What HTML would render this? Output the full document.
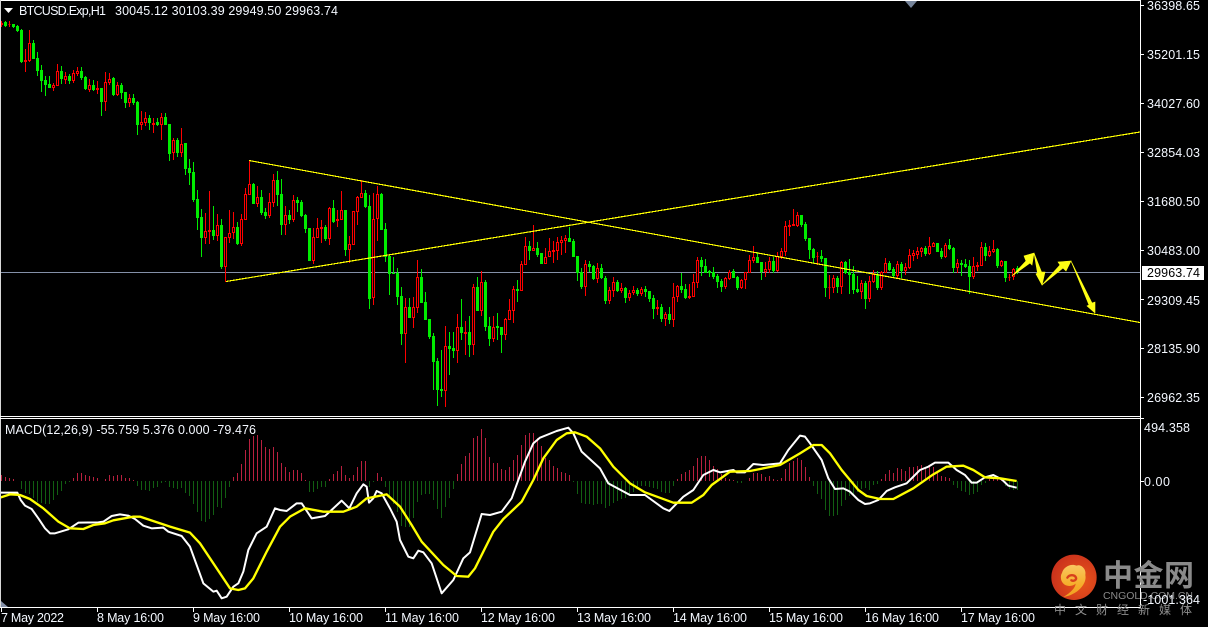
<!DOCTYPE html>
<html lang="en">
<head>
<meta charset="utf-8">
<title>BTCUSD.Exp,H1</title>
<style>
html,body{margin:0;padding:0;background:#000;width:1208px;height:627px;overflow:hidden}
svg{display:block}
text{font-family:"Liberation Sans","Noto Sans CJK SC",sans-serif;font-size:12.5px;fill:#f4f8ff}
</style>
</head>
<body>
<svg width="1208" height="627" viewBox="0 0 1208 627" xmlns="http://www.w3.org/2000/svg">
<rect width="1208" height="627" fill="#000"/>

<!-- histogram -->
<g fill="none" stroke-width="1" shape-rendering="crispEdges">
<path stroke="#b9203f" d="M1.5 481v-6M5.5 481v-4M9.5 481v-3M13.5 481v-2M73.5 481v-3M77.5 481v-8M81.5 481v-8M85.5 481v-6M89.5 481v-5M93.5 481v-4M97.5 481v-3M105.5 481v-2M109.5 481v-6M113.5 481v-5M117.5 481v-6M121.5 481v-6M125.5 481v-3M129.5 481v-3M133.5 481v-1M233.5 481v-4M237.5 481v-8M241.5 481v-17M245.5 481v-31M249.5 481v-42M253.5 481v-45M257.5 481v-46M261.5 481v-41M265.5 481v-34M269.5 481v-32M273.5 481v-34M277.5 481v-29M281.5 481v-18M285.5 481v-14M289.5 481v-9M293.5 481v-11M297.5 481v-11M301.5 481v-8M305.5 481v-1M329.5 481v-2M333.5 481v-7M337.5 481v-10M341.5 481v-15M345.5 481v-6M349.5 481v-3M353.5 481v-6M357.5 481v-14M361.5 481v-20M365.5 481v-20M377.5 481v-8M381.5 481v-4M457.5 481v-7M461.5 481v-17M465.5 481v-25M469.5 481v-28M473.5 481v-43M477.5 481v-45M481.5 481v-52M485.5 481v-43M489.5 481v-24M493.5 481v-18M497.5 481v-18M501.5 481v-12M505.5 481v-11M509.5 481v-14M513.5 481v-21M517.5 481v-26M521.5 481v-36M525.5 481v-46M529.5 481v-48M533.5 481v-48M537.5 481v-43M541.5 481v-35M545.5 481v-23M549.5 481v-21M553.5 481v-15M557.5 481v-13M561.5 481v-9M565.5 481v-8M569.5 481v-6M677.5 481v-2M681.5 481v-7M685.5 481v-9M689.5 481v-11M693.5 481v-15M697.5 481v-23M701.5 481v-25M705.5 481v-25M709.5 481v-21M713.5 481v-15M717.5 481v-12M721.5 481v-7M725.5 481v-3M729.5 481v-2M733.5 481v-1M749.5 481v-3M753.5 481v-8M757.5 481v-8M761.5 481v-7M765.5 481v-4M769.5 481v-5M773.5 481v-2M777.5 481v-1M781.5 481v-3M785.5 481v-12M789.5 481v-18M793.5 481v-20M797.5 481v-23M801.5 481v-21M805.5 481v-14M809.5 481v-4M881.5 481v-2M885.5 481v-7M889.5 481v-11M893.5 481v-8M897.5 481v-13M901.5 481v-12M905.5 481v-10M909.5 481v-14M913.5 481v-14M917.5 481v-15M921.5 481v-16M925.5 481v-13M929.5 481v-16M933.5 481v-14M937.5 481v-9M941.5 481v-5M945.5 481v-4M949.5 481v-3M989.5 481v-2M993.5 481v-2M997.5 481v-3M1001.5 481v-2"/>
<path stroke="#125f12" d="M21.5 481v8M25.5 481v12M29.5 481v13M33.5 481v17M37.5 481v21M41.5 481v22M45.5 481v23M49.5 481v23M53.5 481v19M57.5 481v14M61.5 481v10M65.5 481v3M69.5 481v1M137.5 481v5M141.5 481v9M145.5 481v9M149.5 481v10M153.5 481v7M157.5 481v6M161.5 481v2M165.5 481v1M169.5 481v6M173.5 481v7M177.5 481v8M181.5 481v7M185.5 481v12M189.5 481v15M193.5 481v23M197.5 481v31M201.5 481v40M205.5 481v41M209.5 481v38M213.5 481v34M217.5 481v26M221.5 481v27M225.5 481v17M229.5 481v6M309.5 481v11M313.5 481v11M317.5 481v8M321.5 481v6M325.5 481v6M369.5 481v6M373.5 481v1M385.5 481v6M389.5 481v15M393.5 481v23M397.5 481v31M401.5 481v45M405.5 481v46M409.5 481v46M413.5 481v37M417.5 481v21M421.5 481v14M425.5 481v13M429.5 481v13M433.5 481v19M437.5 481v28M441.5 481v37M445.5 481v26M449.5 481v17M453.5 481v8M573.5 481v1M577.5 481v13M581.5 481v22M585.5 481v23M589.5 481v23M593.5 481v24M597.5 481v23M601.5 481v23M605.5 481v27M609.5 481v25M613.5 481v22M617.5 481v20M621.5 481v18M625.5 481v17M629.5 481v13M633.5 481v11M637.5 481v8M641.5 481v5M645.5 481v5M649.5 481v6M653.5 481v7M657.5 481v8M661.5 481v11M665.5 481v12M669.5 481v12M673.5 481v5M737.5 481v2M741.5 481v2M813.5 481v5M817.5 481v13M821.5 481v18M825.5 481v29M829.5 481v35M833.5 481v35M837.5 481v34M841.5 481v25M845.5 481v19M849.5 481v15M853.5 481v13M857.5 481v11M861.5 481v8M865.5 481v7M869.5 481v9M873.5 481v4M877.5 481v3M953.5 481v4M957.5 481v7M961.5 481v10M965.5 481v11M969.5 481v14M973.5 481v13M977.5 481v11M981.5 481v4M985.5 481v2M1005.5 481v5M1009.5 481v8M1013.5 481v9M1017.5 481v9"/>
</g>

<!-- price line -->
<rect x="1" y="272" width="1139" height="1" fill="#8490a8"/>

<!-- candles -->
<g fill="none" shape-rendering="crispEdges">
<path stroke="#00ec00" stroke-width="1" d="M5.5 21V27M13.5 24V28M17.5 25V32M21.5 29V63M33.5 40V59M37.5 52V76M41.5 65V92M45.5 76V96M49.5 76V88M61.5 66V84M69.5 74V84M81.5 67V80M85.5 76V90M93.5 80V91M101.5 88V116M113.5 77V96M121.5 83V99M125.5 92V108M133.5 94V105M137.5 101V135M149.5 115V130M157.5 118V126M165.5 113V125M169.5 124V161M177.5 138V157M185.5 143V175M189.5 159V185M193.5 162V202M197.5 190V230M201.5 209V257M213.5 206V240M221.5 219V269M237.5 222V245M253.5 183V204M261.5 190V215M265.5 208V219M277.5 171V206M281.5 179V235M289.5 210V224M297.5 197V212M301.5 200V217M305.5 214V233M309.5 228V261M325.5 225V241M333.5 200V223M345.5 210V256M365.5 190V208M369.5 195V309M381.5 193V230M385.5 223V262M389.5 254V295M393.5 257V274M397.5 268V305M401.5 287V345M409.5 298V318M421.5 269V303M425.5 292V320M429.5 319V339M433.5 333V390M437.5 358V406M441.5 350V397M449.5 332V375M453.5 332V358M461.5 299V340M469.5 316V357M477.5 277V311M485.5 280V331M489.5 317V346M497.5 313V340M501.5 327V353M517.5 280V302M529.5 241V260M537.5 242V257M541.5 253V264M569.5 227V242M573.5 239V257M577.5 256V281M581.5 268V289M589.5 261V272M593.5 265V280M601.5 264V279M605.5 276V304M617.5 280V292M625.5 287V303M637.5 288V296M645.5 286V297M649.5 291V302M653.5 295V319M661.5 304V322M669.5 307V324M681.5 273V293M685.5 284V299M701.5 257V276M705.5 259V273M709.5 270V277M713.5 267V279M717.5 274V288M721.5 279V292M733.5 269V278M737.5 276V290M757.5 252V263M761.5 262V280M773.5 257V273M801.5 215V227M805.5 222V241M809.5 238V259M813.5 248V263M821.5 250V262M825.5 258V297M837.5 276V293M845.5 261V274M849.5 259V294M853.5 266V294M857.5 276V293M865.5 281V309M877.5 271V290M889.5 261V271M893.5 267V278M901.5 262V278M925.5 246V256M937.5 243V252M941.5 248V259M949.5 239V250M953.5 247V273M961.5 260V276M965.5 259V268M969.5 260V294M985.5 243V261M997.5 248V268M1005.5 261V282M1017.5 266V274"/>
<path stroke="#00ec00" stroke-width="3" d="M5.5 22V26M13.5 24V27M17.5 26V31M21.5 30V62M33.5 43V59M37.5 58V71M41.5 70V81M45.5 80V85M49.5 84V88M61.5 71V79M69.5 76V81M81.5 71V78M85.5 77V89M93.5 85V90M101.5 88V102M113.5 78V95M121.5 85V93M125.5 92V103M133.5 98V103M137.5 102V125M149.5 118V123M157.5 122V125M165.5 117V125M169.5 124V154M177.5 140V153M185.5 143V169M189.5 168V173M193.5 172V200M197.5 199V218M201.5 217V238M213.5 230V236M221.5 225V267M237.5 227V244M253.5 184V204M261.5 197V213M265.5 212V216M277.5 180V195M281.5 194V225M289.5 215V220M297.5 200V203M301.5 202V216M305.5 215V229M309.5 228V261M325.5 227V239M333.5 208V222M345.5 210V250M365.5 193V207M369.5 206V299M381.5 194V230M385.5 229V257M389.5 256V274M393.5 273V274M397.5 273V297M401.5 296V334M409.5 307V318M421.5 277V303M425.5 302V320M429.5 319V337M433.5 336V362M437.5 361V390M441.5 389V391M449.5 346V349M453.5 348V351M461.5 327V333M469.5 332V345M477.5 287V311M485.5 282V327M489.5 326V339M497.5 326V328M501.5 327V335M517.5 289V291M529.5 246V251M537.5 248V255M541.5 253V264M569.5 238V242M573.5 241V257M577.5 256V273M581.5 272V287M589.5 264V267M593.5 266V279M601.5 268V278M605.5 278V301M617.5 282V291M625.5 288V298M637.5 290V294M645.5 289V292M649.5 291V299M653.5 298V309M661.5 307V319M669.5 314V320M681.5 286V290M685.5 289V298M701.5 260V267M705.5 266V273M709.5 271V273M713.5 272V277M717.5 276V282M721.5 281V287M733.5 271V278M737.5 277V288M757.5 257V263M761.5 262V272M773.5 261V271M801.5 215V225M805.5 224V239M809.5 238V250M813.5 249V258M821.5 256V259M825.5 258V288M837.5 278V287M845.5 262V273M849.5 272V275M853.5 274V290M857.5 289V292M865.5 283V299M877.5 274V288M889.5 263V270M893.5 269V276M901.5 264V271M925.5 248V254M937.5 243V252M941.5 251V257M949.5 245V249M953.5 248V268M961.5 263V265M965.5 264V267M969.5 266V277M985.5 247V256M997.5 249V266M1005.5 261V278M1017.5 268V272"/>
<path stroke="#ff0000" stroke-width="1" d="M1.5 21V27M9.5 21V27M25.5 49V72M29.5 30V62M53.5 83V91M57.5 64V86M65.5 72V84M73.5 70V83M77.5 67V76M89.5 79V92M97.5 81V94M105.5 72V111M109.5 73V85M117.5 82V96M129.5 94V107M141.5 111V130M145.5 112V126M153.5 118V133M161.5 113V140M173.5 138V160M181.5 128V157M205.5 213V244M209.5 191V244M217.5 214V241M225.5 237V282M229.5 210V243M233.5 212V239M241.5 214V246M245.5 188V220M249.5 160V195M257.5 186V207M269.5 193V218M273.5 174V207M285.5 206V235M293.5 195V222M313.5 228V264M317.5 218V238M321.5 220V243M329.5 207V245M337.5 210V227M341.5 191V220M349.5 236V263M353.5 211V245M357.5 196V225M361.5 180V198M373.5 193V305M377.5 186V241M405.5 298V363M413.5 297V328M417.5 260V313M445.5 326V407M457.5 314V363M465.5 321V355M473.5 284V355M481.5 271V316M493.5 316V342M505.5 318V340M509.5 299V320M513.5 286V323M521.5 261V291M525.5 237V265M533.5 225V251M545.5 248V264M549.5 238V257M553.5 241V263M557.5 237V260M561.5 236V255M565.5 235V253M585.5 260V296M597.5 263V283M609.5 287V304M613.5 277V297M621.5 283V293M629.5 290V301M633.5 286V295M641.5 287V296M657.5 300V315M665.5 312V326M673.5 283V327M677.5 285V302M689.5 284V299M693.5 274V297M697.5 257V288M725.5 277V289M729.5 270V280M741.5 279V289M745.5 272V289M749.5 255V273M753.5 246V263M765.5 262V277M769.5 257V273M777.5 252V272M781.5 248V259M785.5 221V256M789.5 220V236M793.5 209V226M797.5 212V227M817.5 252V265M829.5 275V299M833.5 275V293M841.5 261V294M861.5 280V299M869.5 276V302M873.5 270V283M881.5 271V290M885.5 258V273M897.5 261V278M905.5 263V275M909.5 249V269M913.5 250V261M917.5 247V259M921.5 247V257M929.5 237V255M933.5 242V247M945.5 243V258M957.5 259V273M973.5 257V279M977.5 262V271M981.5 242V266M989.5 246V257M993.5 240V253M1001.5 260V267M1009.5 274V281M1013.5 268V280"/>
<path stroke="#ff0000" stroke-width="1" fill="#000" d="M.5 23.5h2V24.5h-2zM8.5 24.5h2V24.5h-2zM24.5 60.5h2V61.5h-2zM28.5 43.5h2V60.5h-2zM52.5 85.5h2V87.5h-2zM56.5 71.5h2V85.5h-2zM64.5 76.5h2V79.5h-2zM72.5 73.5h2V80.5h-2zM76.5 71.5h2V73.5h-2zM88.5 85.5h2V89.5h-2zM96.5 88.5h2V89.5h-2zM104.5 82.5h2V101.5h-2zM108.5 79.5h2V82.5h-2zM116.5 85.5h2V94.5h-2zM128.5 98.5h2V102.5h-2zM140.5 122.5h2V124.5h-2zM144.5 118.5h2V122.5h-2zM152.5 123.5h2V124.5h-2zM160.5 117.5h2V124.5h-2zM172.5 140.5h2V152.5h-2zM180.5 144.5h2V152.5h-2zM204.5 231.5h2V237.5h-2zM208.5 230.5h2V231.5h-2zM216.5 225.5h2V235.5h-2zM224.5 237.5h2V266.5h-2zM228.5 233.5h2V237.5h-2zM232.5 227.5h2V232.5h-2zM240.5 219.5h2V243.5h-2zM244.5 194.5h2V219.5h-2zM248.5 184.5h2V194.5h-2zM256.5 197.5h2V203.5h-2zM268.5 202.5h2V215.5h-2zM272.5 180.5h2V202.5h-2zM284.5 215.5h2V224.5h-2zM292.5 200.5h2V219.5h-2zM312.5 237.5h2V260.5h-2zM316.5 228.5h2V237.5h-2zM320.5 227.5h2V228.5h-2zM328.5 208.5h2V238.5h-2zM336.5 219.5h2V220.5h-2zM340.5 210.5h2V219.5h-2zM348.5 244.5h2V249.5h-2zM352.5 211.5h2V244.5h-2zM356.5 197.5h2V211.5h-2zM360.5 193.5h2V197.5h-2zM372.5 219.5h2V297.5h-2zM376.5 194.5h2V218.5h-2zM404.5 307.5h2V333.5h-2zM412.5 307.5h2V317.5h-2zM416.5 277.5h2V307.5h-2zM444.5 346.5h2V390.5h-2zM456.5 327.5h2V350.5h-2zM464.5 332.5h2V333.5h-2zM472.5 287.5h2V344.5h-2zM480.5 282.5h2V310.5h-2zM492.5 327.5h2V338.5h-2zM504.5 319.5h2V334.5h-2zM508.5 310.5h2V319.5h-2zM512.5 289.5h2V310.5h-2zM520.5 264.5h2V290.5h-2zM524.5 246.5h2V264.5h-2zM532.5 248.5h2V250.5h-2zM544.5 257.5h2V263.5h-2zM548.5 251.5h2V256.5h-2zM552.5 250.5h2V251.5h-2zM556.5 242.5h2V250.5h-2zM560.5 240.5h2V242.5h-2zM564.5 238.5h2V240.5h-2zM584.5 264.5h2V286.5h-2zM596.5 268.5h2V278.5h-2zM608.5 290.5h2V300.5h-2zM612.5 282.5h2V290.5h-2zM620.5 288.5h2V290.5h-2zM628.5 293.5h2V297.5h-2zM632.5 290.5h2V292.5h-2zM640.5 289.5h2V293.5h-2zM656.5 307.5h2V308.5h-2zM664.5 314.5h2V318.5h-2zM672.5 297.5h2V319.5h-2zM676.5 286.5h2V296.5h-2zM688.5 296.5h2V297.5h-2zM692.5 282.5h2V296.5h-2zM696.5 260.5h2V282.5h-2zM724.5 278.5h2V286.5h-2zM728.5 272.5h2V278.5h-2zM740.5 280.5h2V287.5h-2zM744.5 272.5h2V279.5h-2zM748.5 260.5h2V272.5h-2zM752.5 257.5h2V260.5h-2zM764.5 269.5h2V271.5h-2zM768.5 261.5h2V269.5h-2zM776.5 256.5h2V270.5h-2zM780.5 251.5h2V256.5h-2zM784.5 226.5h2V251.5h-2zM788.5 225.5h2V226.5h-2zM792.5 224.5h2V225.5h-2zM796.5 215.5h2V225.5h-2zM816.5 256.5h2V256.5h-2zM828.5 287.5h2V287.5h-2zM832.5 278.5h2V287.5h-2zM840.5 262.5h2V286.5h-2zM860.5 283.5h2V291.5h-2zM868.5 281.5h2V298.5h-2zM872.5 274.5h2V281.5h-2zM880.5 272.5h2V287.5h-2zM884.5 263.5h2V272.5h-2zM896.5 264.5h2V275.5h-2zM904.5 267.5h2V270.5h-2zM908.5 255.5h2V267.5h-2zM912.5 253.5h2V255.5h-2zM916.5 251.5h2V254.5h-2zM920.5 248.5h2V251.5h-2zM928.5 246.5h2V253.5h-2zM932.5 243.5h2V246.5h-2zM944.5 245.5h2V256.5h-2zM956.5 263.5h2V267.5h-2zM972.5 266.5h2V276.5h-2zM976.5 265.5h2V266.5h-2zM980.5 247.5h2V265.5h-2zM988.5 251.5h2V255.5h-2zM992.5 249.5h2V251.5h-2zM1000.5 261.5h2V265.5h-2zM1008.5 277.5h2V277.5h-2zM1012.5 269.5h2V276.5h-2z"/>
</g>

<!-- trend lines -->
<g stroke="#ffff00" stroke-width="1.2" fill="none" shape-rendering="crispEdges">
<path d="M249 160.5L1140 322.5"/>
<path d="M226 281.5L1140 132"/>
</g>

<!-- arrows -->
<g fill="#ffff14" stroke="#ffff14" stroke-width=".6" stroke-linejoin="miter">
<polygon points="1012,276 1026,261 1024,256 1034,253 1032,265 1030,263"/>
<polygon points="1034,253 1037.5,273 1036,274 1042,285 1045,272 1041.5,272"/>
<polygon points="1042,285 1060,265 1058,262 1071,261 1066,271 1063,268"/>
<polygon points="1071,261 1089,305 1087,306 1095,313 1095,302 1092,303"/>
</g>

<!-- MACD lines -->
<g transform="translate(0,415) scale(.33333)" fill="none" stroke-linejoin="round">
<polyline stroke="#ffffff" stroke-width="6" points="0,233 52,233 62,255 75,272 95,282 115,310 135,340 150,355 165,355 205,343 235,323 295,322 310,320 335,303 360,298 385,302 405,312 430,332 455,340 490,338 505,350 545,363 570,395 590,450 610,505 640,530 650,527 665,550 680,545 700,515 715,505 730,470 745,405 770,355 800,335 825,280 840,285 860,288 890,265 905,265 935,310 975,303 1000,280 1025,257 1048,280 1070,235 1090,208 1100,215 1107,263 1120,250 1130,228 1145,235 1170,280 1190,320 1200,375 1225,425 1240,430 1255,407 1270,412 1295,445 1325,535 1360,495 1390,430 1410,412 1445,297 1470,300 1505,290 1535,250 1575,140 1600,85 1620,68 1670,48 1705,38 1720,55 1745,110 1800,160 1825,205 1890,240 1935,240 1990,280 2008,288 2050,245 2080,225 2110,180 2140,165 2160,172 2200,165 2210,172 2235,172 2260,147 2290,150 2340,145 2365,105 2400,62 2415,65 2430,85 2465,135 2485,190 2505,222 2530,220 2550,230 2575,255 2595,267 2610,265 2635,255 2660,228 2685,217 2720,205 2760,165 2785,155 2805,143 2845,143 2870,165 2895,180 2915,203 2930,203 2955,187 2980,180 3005,193 3025,212 3050,218"/>
<polyline stroke="#ffff00" stroke-width="7" points="0,248 30,238 60,240 90,252 130,280 175,320 210,340 250,342 280,330 315,325 340,316 400,305 420,305 465,320 510,335 570,353 600,385 640,445 690,520 715,525 735,520 760,490 800,410 840,335 870,305 915,280 970,290 1030,290 1070,275 1100,250 1160,238 1200,275 1235,330 1265,380 1330,450 1370,483 1405,485 1425,460 1480,350 1510,312 1565,260 1600,195 1630,130 1670,75 1700,55 1725,52 1760,65 1800,100 1840,155 1890,205 1935,232 2020,263 2075,263 2110,240 2135,210 2190,170 2250,168 2340,150 2400,115 2440,90 2465,90 2490,115 2525,165 2575,225 2600,243 2640,252 2680,252 2740,220 2800,178 2840,155 2890,152 2920,165 2955,187 3000,190 3050,198"/>
</g>

<!-- frame -->
<g fill="#fff" shape-rendering="crispEdges">
<rect x="0" y="0" width="1141" height="1"/>
<rect x="0" y="0" width="1" height="607" fill="#d8d8d8"/>
<rect x="1140" y="0" width="1" height="608"/>
<rect x="0" y="416" width="1141" height="1"/>
<rect x="0" y="418" width="1141" height="1"/>
<rect x="0" y="607" width="1141" height="1"/>
<!-- y ticks -->
<rect x="1141" y="5" width="3" height="1"/><rect x="1141" y="54" width="3" height="1"/><rect x="1141" y="103" width="3" height="1"/><rect x="1141" y="152" width="3" height="1"/><rect x="1141" y="201" width="3" height="1"/><rect x="1141" y="250" width="3" height="1"/><rect x="1141" y="299" width="3" height="1"/><rect x="1141" y="348" width="3" height="1"/><rect x="1141" y="397" width="3" height="1"/><rect x="1141" y="481" width="3" height="1"/><rect x="1141" y="418" width="3" height="1"/>
<!-- x ticks -->
<rect x="1" y="608" width="1" height="4"/><rect x="97" y="608" width="1" height="4"/><rect x="193" y="608" width="1" height="4"/><rect x="289" y="608" width="1" height="4"/><rect x="385" y="608" width="1" height="4"/><rect x="481" y="608" width="1" height="4"/><rect x="577" y="608" width="1" height="4"/><rect x="673" y="608" width="1" height="4"/><rect x="769" y="608" width="1" height="4"/><rect x="865" y="608" width="1" height="4"/><rect x="961" y="608" width="1" height="4"/>
</g>

<!-- small grey triangles -->
<polygon points="905,1 917,1 911,8" fill="#76849a"/>
<polygon points="1,601 8,607 1,607" fill="#8490a8"/>
<!-- header triangle -->
<polygon points="4,8 13,8 8.5,13" fill="#fff"/>

<!-- header text -->
<text x="19" y="15" textLength="87" lengthAdjust="spacing">BTCUSD.Exp,H1</text>
<text x="115" y="15" textLength="223" lengthAdjust="spacing">30045.12 30103.39 29949.50 29963.74</text>
<text x="5" y="434" textLength="251" lengthAdjust="spacing">MACD(12,26,9) -55.759 5.376 0.000 -79.476</text>

<!-- price axis -->
<text x="1147" y="10" textLength="53" lengthAdjust="spacing">36398.65</text>
<text x="1147" y="59" textLength="53" lengthAdjust="spacing">35201.15</text>
<text x="1147" y="108" textLength="53" lengthAdjust="spacing">34027.60</text>
<text x="1147" y="157" textLength="53" lengthAdjust="spacing">32854.03</text>
<text x="1147" y="206" textLength="53" lengthAdjust="spacing">31680.50</text>
<text x="1147" y="255" textLength="53" lengthAdjust="spacing">30483.00</text>
<text x="1147" y="305" textLength="53" lengthAdjust="spacing">29309.45</text>
<text x="1147" y="353" textLength="53" lengthAdjust="spacing">28135.90</text>
<text x="1147" y="402" textLength="53" lengthAdjust="spacing">26962.35</text>
<rect x="1142" y="266" width="62" height="14" fill="#fff"/>
<text x="1147" y="277" textLength="53" lengthAdjust="spacing" style="fill:#000">29963.74</text>
<text x="1144" y="432" textLength="46" lengthAdjust="spacing">494.358</text>
<text x="1144" y="486" textLength="26" lengthAdjust="spacing">0.00</text>

<!-- watermark logo -->
<defs>
<radialGradient id="lg" cx="65%" cy="60%" r="70%">
<stop offset="0" stop-color="#e8561a"/><stop offset="1" stop-color="#c9301c"/>
</radialGradient>
<linearGradient id="lc" x1="0" y1="0" x2="0" y2="1">
<stop offset="0" stop-color="#f9c860"/><stop offset=".6" stop-color="#f6ae2c"/><stop offset="1" stop-color="#f0a020"/>
</linearGradient>
</defs>
<g transform="translate(1030,545) scale(.33333)">
<circle cx="132" cy="97" r="68" fill="url(#lg)"/>
<path d="M96,84 C100,66 122,54 140,62 C152,56 170,72 166,90 C172,116 142,150 100,156 C124,142 136,128 137,116 C124,128 100,124 94,106 C92,98 92,90 96,84Z" fill="url(#lc)"/>
<path d="M112,98 C118,88 134,88 138,98 C140,104 132,110 124,106" fill="none" stroke="#d8401c" stroke-width="7" stroke-linecap="round"/>
</g>
<text x="1103" y="586" textLength="91" lengthAdjust="spacing" style="font-family:'Liberation Sans','Noto Sans CJK SC',sans-serif;font-size:30px;font-weight:700;fill:#8a8a8a">中金网</text>
<text x="1103" y="599" textLength="90" lengthAdjust="spacing" style="font-size:10.5px;fill:#8a8a8a">CNGOLD.COM.CN</text>
<text x="1054" y="614" textLength="138" lengthAdjust="spacing" style="font-size:12px;fill:#8e8e8e">中文财经新媒体</text>
<text x="1143" y="604" textLength="57" lengthAdjust="spacing">-1001.364</text>

<!-- time axis -->
<text x="1" y="622" textLength="63" lengthAdjust="spacing">7 May 2022</text>
<text x="97" y="622" textLength="67" lengthAdjust="spacing">8 May 16:00</text>
<text x="193" y="622" textLength="67" lengthAdjust="spacing">9 May 16:00</text>
<text x="289" y="622" textLength="74" lengthAdjust="spacing">10 May 16:00</text>
<text x="385" y="622" textLength="74" lengthAdjust="spacing">11 May 16:00</text>
<text x="481" y="622" textLength="74" lengthAdjust="spacing">12 May 16:00</text>
<text x="577" y="622" textLength="74" lengthAdjust="spacing">13 May 16:00</text>
<text x="673" y="622" textLength="74" lengthAdjust="spacing">14 May 16:00</text>
<text x="769" y="622" textLength="74" lengthAdjust="spacing">15 May 16:00</text>
<text x="865" y="622" textLength="74" lengthAdjust="spacing">16 May 16:00</text>
<text x="961" y="622" textLength="74" lengthAdjust="spacing">17 May 16:00</text>
</svg>
</body>
</html>
